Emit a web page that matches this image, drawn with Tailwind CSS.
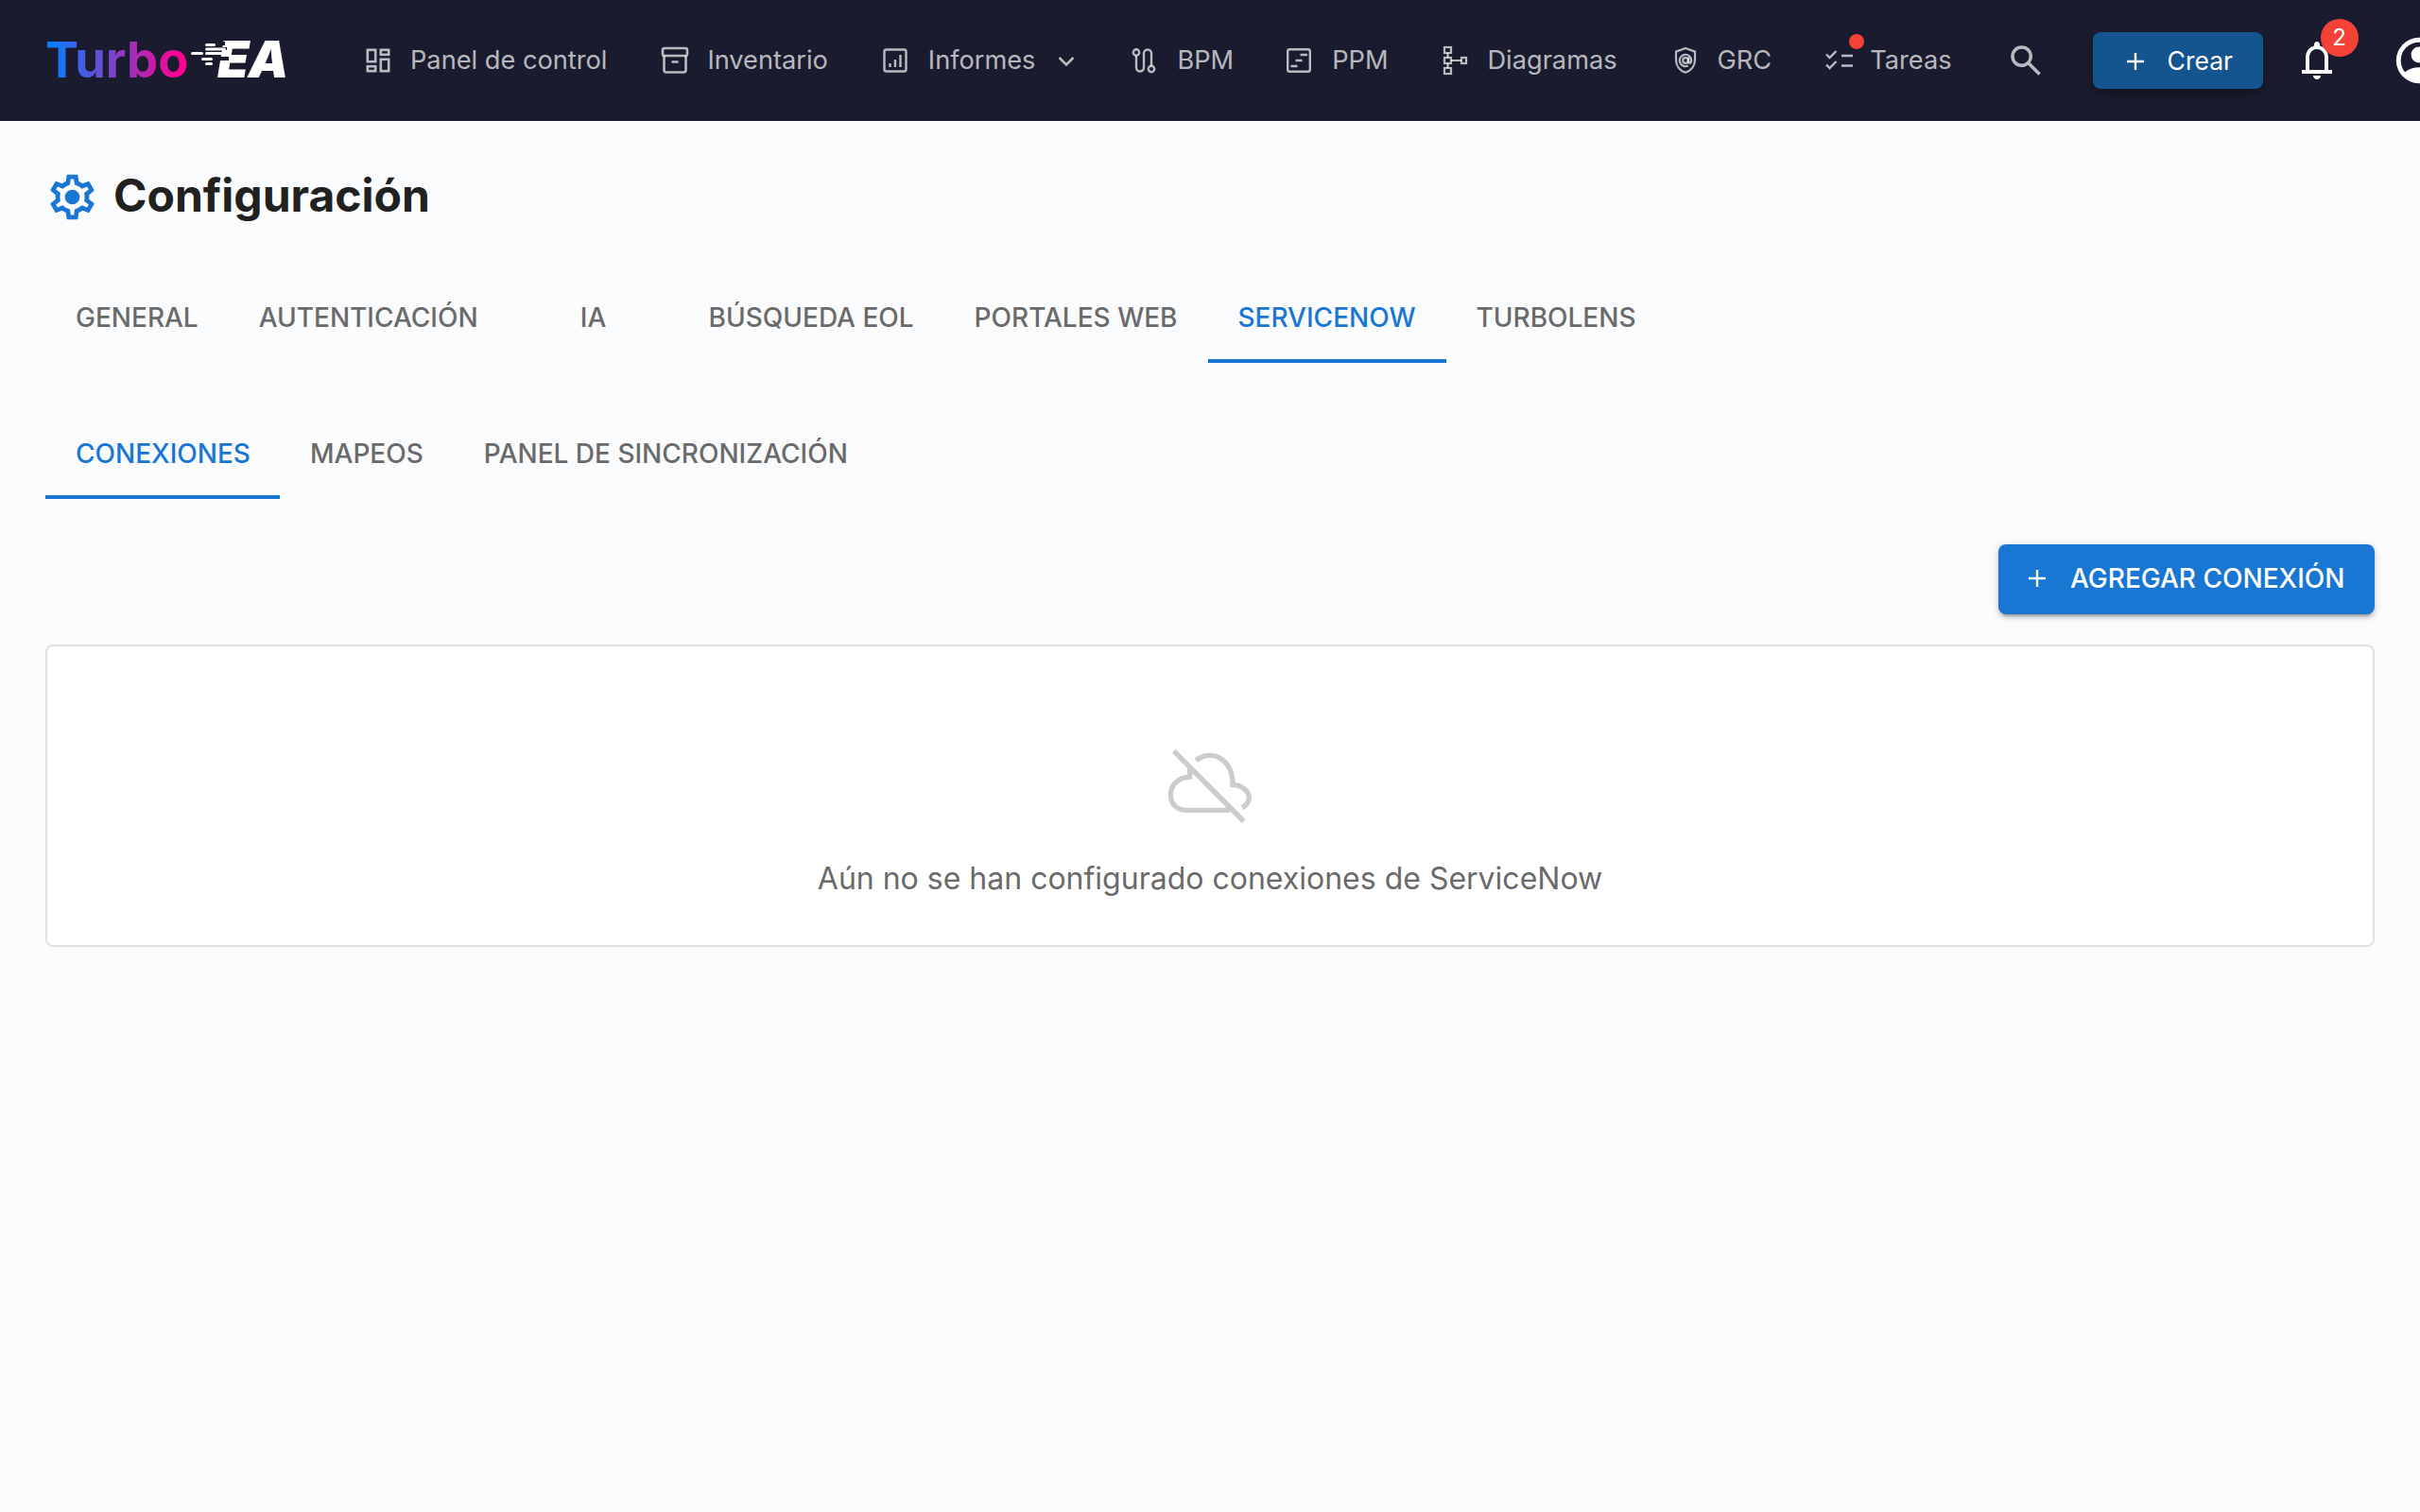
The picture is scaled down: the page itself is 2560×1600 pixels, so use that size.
<!DOCTYPE html>
<html lang="es">
<head>
  <meta charset="UTF-8" />
  <title>Turbo EA - Configuración</title>
  <script src="https://cdn.jsdelivr.net/npm/@tailwindcss/browser@4"></script>
</head>
<body class="w-[2560px] h-[1600px] overflow-hidden bg-[#fafbfd] font-[Inter,sans-serif]">

  <!-- Top bar -->
  <header class="h-[128px] bg-[#1a1b2e] flex items-center pl-[48px] whitespace-nowrap overflow-hidden">
    <!-- Logo -->
    <div class="relative w-[334px] h-[56px] shrink-0">
      <span class="absolute left-[0px] top-[-5px] text-[52.5px] leading-[64px] font-bold text-transparent bg-clip-text bg-[linear-gradient(90deg,#0a7cff_5%,#ff0090_95%)]">Turbo</span>
      <span class="absolute left-[182px] top-[-5px] text-[54px] leading-[64px] font-black italic tracking-[-1px] text-white">EA</span>
      <!-- speed lines over the E -->
      <svg class="absolute left-[150px] top-[8px]" width="60" height="32" viewBox="0 0 60 32">
        <path fill="#1a1b2e" d="M30 0h10v4H30zM30 6h12v3H30zM30 11h8v3H30zM30 16h14v4H30z"/>
        <g fill="#fff">
          <rect x="19" y="2" width="11" height="3" rx="1.500"/>
          <rect x="19" y="6.500" width="22" height="3" rx="1.500"/>
          <rect x="4" y="11" width="13" height="3" rx="1.500"/>
          <rect x="19" y="11" width="20" height="3" rx="1.500"/>
          <rect x="15" y="17" width="12" height="3" rx="1.500"/>
          <rect x="19" y="22" width="8" height="3" rx="1.500"/>
        </g>
      </svg>
    </div>

    <!-- Main nav -->
    <nav class="flex items-center gap-[53px] text-[27.2px] text-white/70">
      <a class="flex items-center gap-[16px]">
        <svg class="w-[36px] h-[36px]" viewBox="0 0 36 36" fill="none" stroke="currentColor" stroke-width="2.6">
          <rect x="6.800" y="6.800" width="8.400" height="12.400"/><rect x="20.800" y="6.800" width="8.400" height="5"/>
          <rect x="6.800" y="24.200" width="8.400" height="5"/><rect x="20.800" y="16.800" width="8.400" height="12.400"/>
        </svg>
        Panel de control
      </a>
      <a class="flex items-center gap-[16px] ml-[1px]">
        <svg class="w-[36px] h-[36px]" viewBox="0 0 36 36" fill="none" stroke="currentColor" stroke-width="2.6">
          <rect x="5" y="5" width="26" height="8" rx="2"/>
          <path d="M6.500 13v15a2.500 2.500 0 0 0 2.500 2.500h18a2.500 2.500 0 0 0 2.500-2.500V13M14.500 19.500h7"/>
        </svg>
        Inventario
      </a>
      <a class="flex items-center">
        <svg class="w-[36px] h-[36px] mr-[17px]" viewBox="0 0 36 36" fill="none" stroke="currentColor" stroke-width="2.400">
          <rect x="6.500" y="6.500" width="23" height="23" rx="2"/>
          <path d="M12.500 25v-4M18 25V17M23.500 25V12"/>
        </svg>
        Informes
        <svg class="w-[36px] h-[36px] ml-[15px]" viewBox="0 0 36 36" fill="none" stroke="currentColor" stroke-width="2.600">
          <path d="M10.500 15l7.500 7.500 7.500-7.500"/>
        </svg>
      </a>
      <a class="flex items-center gap-[17px] -ml-[7px]">
        <svg class="w-[36px] h-[36px]" viewBox="0 0 36 36" fill="none" stroke="currentColor" stroke-width="2.400">
          <circle cx="10" cy="9.500" r="3.200"/><circle cx="26" cy="27" r="3.200"/>
          <path d="M10 12.700V25.500a4 4 0 0 0 8 0V10.500a4 4 0 0 1 8 0V23.800"/>
        </svg>
        BPM
      </a>
      <a class="flex items-center gap-[17px] -ml-[2px]">
        <svg class="w-[36px] h-[36px]" viewBox="0 0 36 36" fill="none" stroke="currentColor" stroke-width="2.400">
          <rect x="6.200" y="6.200" width="23.600" height="23.600" rx="2"/>
          <path d="M19.500 12h7.500M14.500 18h7M9.500 24h7"/>
        </svg>
        PPM
      </a>
      <a class="flex items-center gap-[16px]">
        <svg class="w-[36px] h-[36px]" viewBox="0 0 36 36" fill="none" stroke="currentColor" stroke-width="2.200">
          <rect x="7" y="4" width="7" height="6"/><rect x="7" y="15" width="7" height="6"/>
          <rect x="7" y="26" width="7" height="6"/><rect x="25" y="15" width="5" height="6"/>
          <path d="M10.500 10v5M10.500 21v5M14 18H25"/>
        </svg>
        Diagramas
      </a>
      <a class="flex items-center gap-[17px]">
        <svg class="w-[36px] h-[36px]" viewBox="0 0 36 36" fill="none" stroke="currentColor" stroke-width="2.200">
          <path d="M19 5l10 3.600v9c0 6.200-4.200 11.200-10 13.200-5.800-2-10-7-10-13.200v-9z"/>
          <circle cx="19" cy="18" r="2.800"/>
          <path d="M22.200 14.500v5c0 1.800 3 1.800 3-1.500a6.200 6.200 0 1 0-3.400 5.500"/>
        </svg>
        GRC
      </a>
      <a class="relative flex items-center gap-[15px]">
        <svg class="w-[36px] h-[36px]" viewBox="0 0 36 36" fill="none" stroke="currentColor" stroke-width="2.400">
          <path d="M5 11.500l3.500 3.500 7-7M5 22.500l3.500 3.500 7-7M21 13h12M21 23.500h12"/>
        </svg>
        Tareas
        <span class="absolute left-[29px] top-[-8px] w-[16px] h-[16px] rounded-full bg-[#f44336]"></span>
      </a>
    </nav>

    <!-- Search -->
    <svg class="w-[42px] h-[42px] ml-[57px] shrink-0 text-white/70" viewBox="0 0 24 24" fill="currentColor">
      <path d="M19.600 21l-6.300-6.300q-.75.6-1.725.975T9.500 16q-2.725 0-4.612-1.888T3 9.500t1.888-4.612T9.500 3t4.613 1.888T16 9.500q0 1.100-.35 2.075T14.700 13.300l6.300 6.300zM9.500 14q1.875 0 3.188-1.312T14 9.500t-1.312-3.187T9.500 5T6.313 6.313T5 9.500t1.313 3.188T9.500 14"/>
    </svg>

    <!-- Create -->
    <button class="ml-[50px] w-[180px] h-[60px] shrink-0 flex items-center pl-[32px] pt-[2px] gap-[21px] rounded-[8px] bg-[#14548f] text-white text-[26.5px] font-normal shadow-[0_6px_10px_rgba(0,0,0,0.25)]">
      <svg class="w-[26px] h-[26px]" viewBox="0 0 26 26" stroke="currentColor" stroke-width="2.400"><path d="M13 4v18M4 13h18"/></svg>
      Crear
    </button>

    <!-- Notifications -->
    <div class="relative ml-[33px] w-[48px] h-[48px] shrink-0 text-white">
      <svg class="w-[48px] h-[48px]" viewBox="0 0 24 24" fill="currentColor">
        <path d="M4 19v-2h2v-7q0-2.075 1.250-3.687T10.500 4.200v-.7q0-.625.438-1.062T12 2t1.063.438T13.500 3.500v.7q2 .5 3.250 2.113T18 10v7h2v2zm8 3q-.825 0-1.412-.587T10 20h4q0 .825-.587 1.413T12 22m-4-5h8v-7q0-1.650-1.175-2.825T12 6T9.175 7.175T8 10z"/>
      </svg>
      <span class="absolute left-[28px] top-[-20px] w-[40px] h-[40px] rounded-full bg-[#f44336] flex items-center justify-center text-[24px] leading-none">2</span>
    </div>

    <!-- Account -->
    <svg class="ml-[55px] w-[58px] h-[58px] shrink-0 text-white" viewBox="0 0 24 24" fill="currentColor">
      <path d="M5.850 17.100q1.275-.975 2.850-1.537T12 15t3.300.563t2.850 1.537q.875-1.025 1.363-2.325T20 12q0-3.325-2.337-5.663T12 4T6.337 6.338T4 12q0 1.475.488 2.775T5.850 17.100M12 13q-1.475 0-2.488-1.012T8.500 9.500t1.013-2.488T12 6t2.488 1.013T15.500 9.500t-1.012 2.488T12 13m0 9q-2.075 0-3.900-.788t-3.175-2.137T2.788 15.900T2 12t.788-3.900t2.137-3.175T8.100 2.788T12 2t3.900.788t3.175 2.137T21.213 8.100T22 12t-.788 3.900t-2.137 3.175t-3.175 2.138T12 22"/>
    </svg>
  </header>

  <main class="px-[48px] pt-[48px]">
    <!-- Page title -->
    <div class="flex items-center h-[64px] mb-[48px]">
      <svg class="w-[57px] h-[57px] text-[#1976d2] mr-[15px]" viewBox="0 0 24 24" fill="currentColor">
        <path d="M19.43 12.980c.04-.32.07-.64.07-.98 0-.34-.03-.66-.07-.98l2.110-1.650c.19-.15.24-.42.12-.64l-2-3.460c-.09-.16-.26-.25-.44-.25-.06 0-.12.01-.17.03l-2.490 1c-.52-.4-1.080-.73-1.690-.98l-.38-2.650C14.460 2.180 14.250 2 14 2h-4c-.25 0-.46.18-.49.42l-.38 2.650c-.61.25-1.170.59-1.690.98l-2.490-1c-.06-.02-.12-.03-.18-.03-.17 0-.34.09-.43.25l-2 3.460c-.13.22-.07.49.12.64l2.110 1.650c-.04.32-.07.65-.07.98 0 .33.03.66.07.98l-2.110 1.650c-.19.15-.24.42-.12.64l2 3.460c.09.16.26.25.44.25.06 0 .12-.01.17-.03l2.490-1c.52.4 1.080.73 1.690.98l.38 2.650c.03.24.24.42.49.42h4c.25 0 .46-.18.49-.42l.38-2.650c.61-.25 1.170-.59 1.690-.98l2.490 1c.06.02.12.03.18.03.17 0 .34-.09.43-.25l2-3.460c.12-.22.07-.49-.12-.64l-2.110-1.650zm-1.980-1.710c.04.31.05.52.05.73 0 .21-.02.43-.05.73l-.14 1.130.89.7 1.080.84-.7 1.210-1.270-.51-1.040-.42-.9.68c-.43.32-.84.56-1.250.73l-1.060.43-.16 1.130-.2 1.350h-1.400l-.19-1.350-.16-1.130-1.060-.43c-.43-.18-.83-.41-1.230-.71l-.91-.7-1.060.43-1.270.51-.7-1.210 1.080-.84.89-.7-.14-1.130c-.03-.31-.05-.54-.05-.74s.02-.43.05-.73l.14-1.130-.89-.7-1.080-.84.7-1.210 1.270.51 1.040.42.9-.68c.43-.32.84-.56 1.250-.73l1.060-.43.16-1.130.2-1.350h1.390l.19 1.350.16 1.130 1.060.43c.43.18.83.41 1.230.71l.91.7 1.060-.43 1.270-.51.7 1.210-1.070.85-.89.7.14 1.130z"/>
        <circle cx="12" cy="12" r="3.300"/>
      </svg>
      <h1 class="text-[48px] leading-[64px] font-bold text-[#212121] pb-[2px]">Configuración</h1>
    </div>

    <!-- Settings tabs -->
    <div class="flex h-[96px] mb-[48px] text-[28px] font-medium text-[#6a6a6a] whitespace-nowrap">
      <button class="px-[32px] min-w-[180px]">GENERAL</button>
      <button class="px-[32px] min-w-[180px]">AUTENTICACIÓN</button>
      <button class="px-[32px] min-w-[180px]">IA</button>
      <button class="px-[32px] min-w-[180px]">BÚSQUEDA EOL</button>
      <button class="px-[32px] min-w-[180px]">PORTALES WEB</button>
      <button class="px-[32px] min-w-[180px] text-[#1976d2] border-b-4 border-[#1976d2] pt-[4px]">SERVICENOW</button>
      <button class="px-[32px] min-w-[180px]">TURBOLENS</button>
    </div>

    <!-- ServiceNow tabs -->
    <div class="flex h-[96px] mb-[48px] text-[28px] font-medium text-[#6a6a6a] whitespace-nowrap">
      <button class="px-[32px] w-[248px] text-[#1976d2] border-b-4 border-[#1976d2] pt-[4px]">CONEXIONES</button>
      <button class="px-[32px] min-w-[180px]">MAPEOS</button>
      <button class="px-[32px] min-w-[180px]">PANEL DE SINCRONIZACIÓN</button>
    </div>

    <div class="flex justify-end mb-[32px]">
      <button class="h-[74px] w-[398px] flex items-center pl-[30px] pb-[2px] gap-[24px] rounded-[8px] bg-[#1976d2] text-white text-[28px] font-medium shadow-[0_6px_2px_-4px_rgba(0,0,0,0.2),0_4px_4px_0_rgba(0,0,0,0.14),0_2px_10px_0_rgba(0,0,0,0.12)]">
        <svg class="w-[22px] h-[22px]" viewBox="0 0 22 22" stroke="currentColor" stroke-width="2.400"><path d="M11 2v18M2 11h18"/></svg>
        AGREGAR CONEXIÓN
      </button>
    </div>

    <!-- Empty state -->
    <div class="h-[320px] bg-white border-2 border-[#e0e0e0] rounded-[8px] flex flex-col items-center pt-[108px]">
      <svg class="w-[88px] h-[80px] text-[#cccccc]" viewBox="258 92 264 240" fill="none" stroke="currentColor" stroke-width="16">
        <path d="M275 100L497 323"/>
        <path d="M345 130C400 90 465 130 462 208C495 208 514 230 514 250C514 262 505 272 492 280"/>
        <path d="M326 155V182C290 185 265 205 265 240C265 268 285 288 315 288H452"/>
      </svg>
      <p class="mt-[34px] text-[32px] leading-[48px] text-[#6a6a6a]">Aún no se han configurado conexiones de ServiceNow</p>
    </div>
  </main>
</body>
</html>
